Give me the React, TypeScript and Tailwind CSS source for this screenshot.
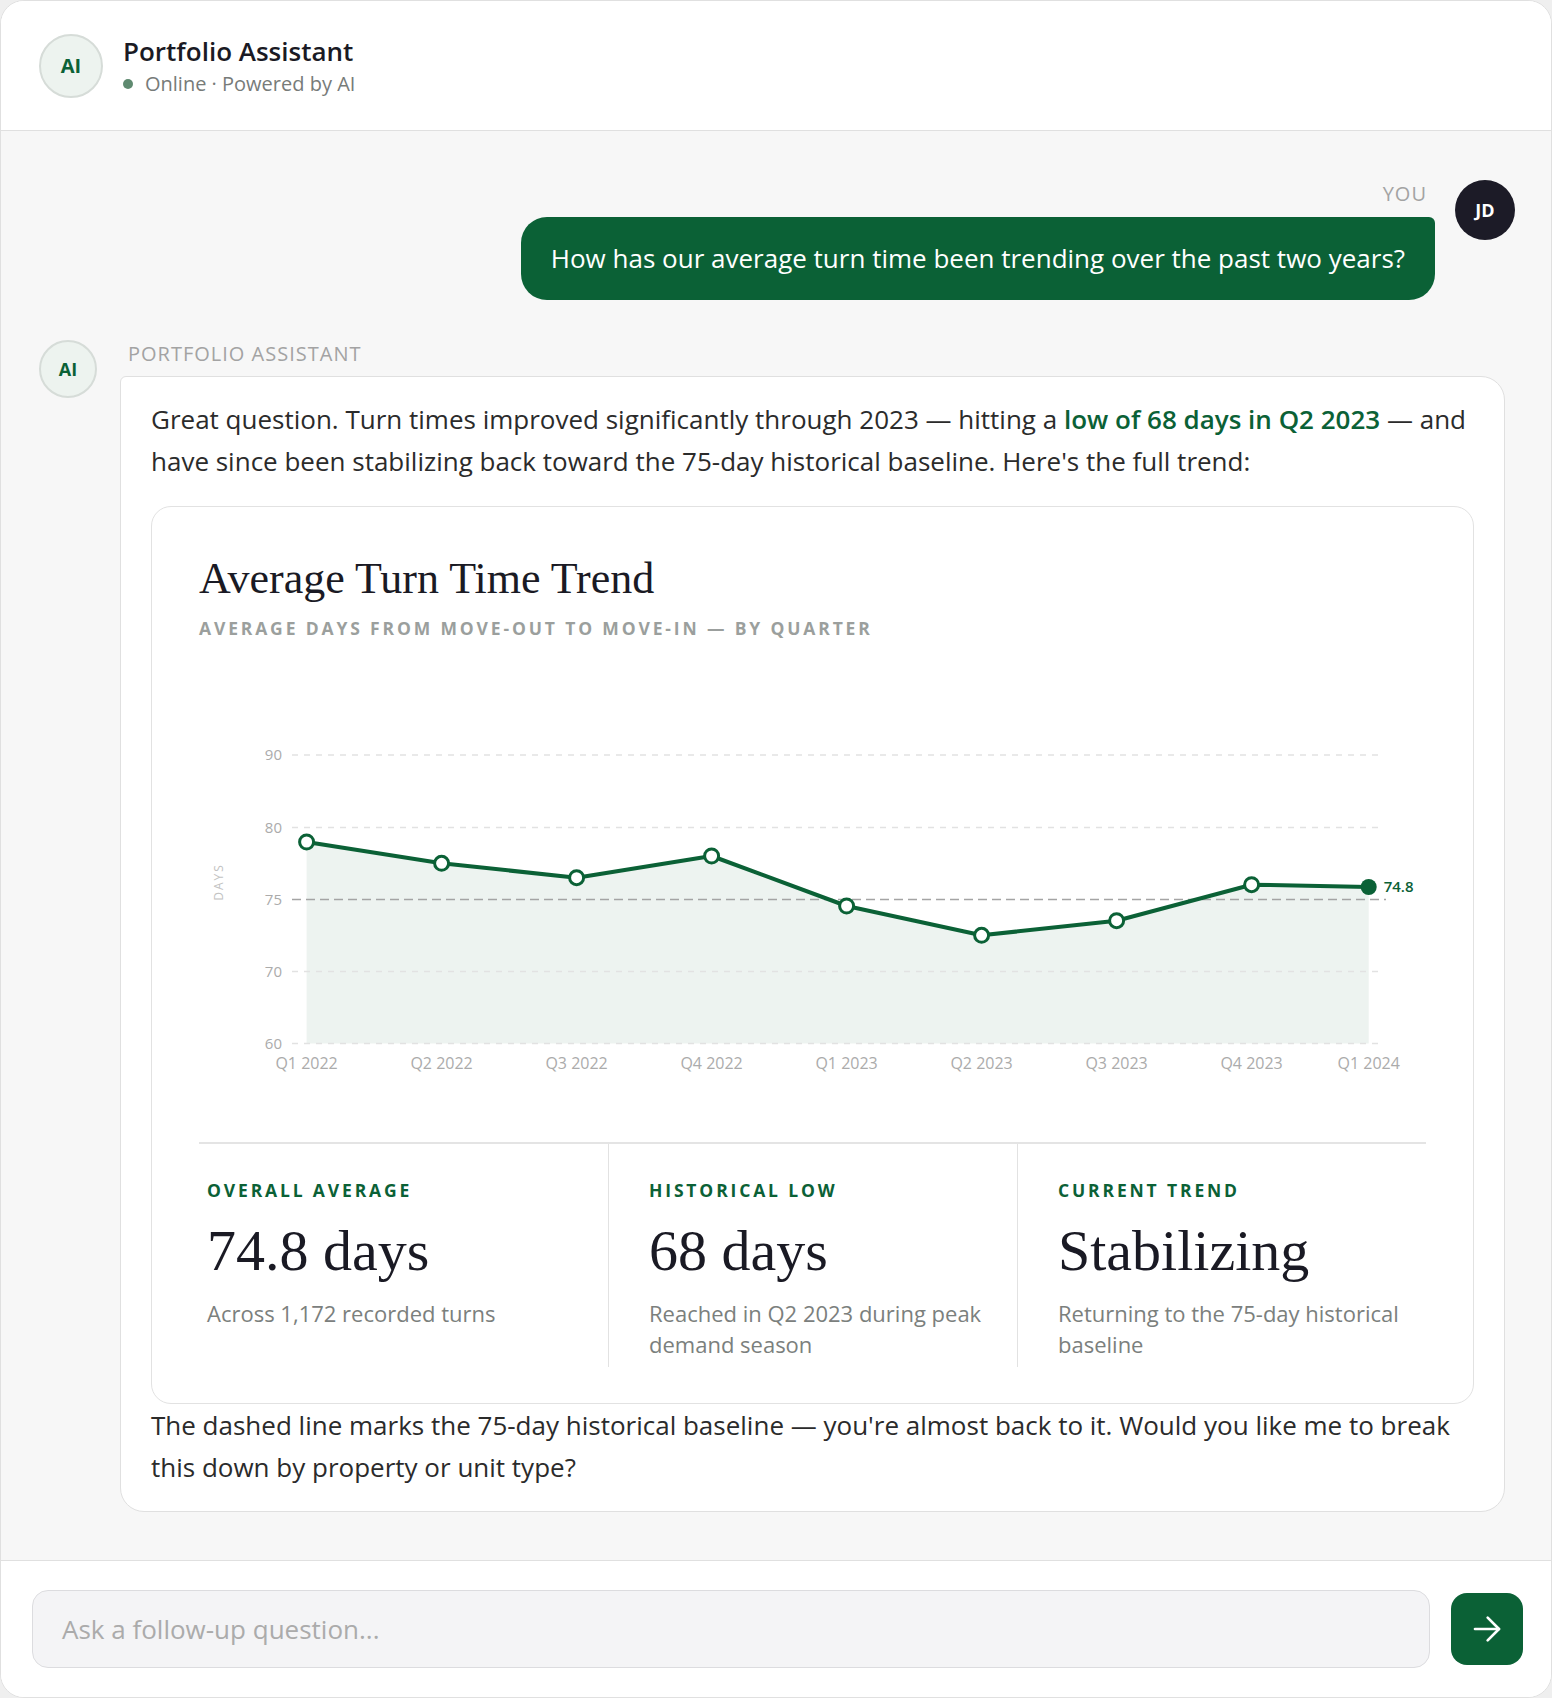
import { ReactNode } from "react";

const GREEN = "#0b6136";

const points = [
  { label: "Q1 2022", x: 107.6, y: 180 },
  { label: "Q2 2022", x: 242.6, y: 201.3 },
  { label: "Q3 2022", x: 377.6, y: 215.7 },
  { label: "Q4 2022", x: 512.6, y: 194 },
  { label: "Q1 2023", x: 647.6, y: 244 },
  { label: "Q2 2023", x: 782.6, y: 273.3 },
  { label: "Q3 2023", x: 917.6, y: 258.7 },
  { label: "Q4 2023", x: 1052.6, y: 222.7 },
  { label: "Q1 2024", x: 1169.7, y: 225 },
];

const gridLines = [
  { value: "90", y: 93 },
  { value: "80", y: 165.5 },
  { value: "75", y: 237.5, baseline: true },
  { value: "70", y: 309.5 },
  { value: "60", y: 381.5 },
];

const TrendChart = () => {
  const line = points.map((p, i) => `${i === 0 ? "M" : "L"}${p.x} ${p.y}`).join(" ");
  const last = points[points.length - 1];
  const area = `${line} L${last.x} 381.5 L${points[0].x} 381.5 Z`;

  return (
    <svg width="1224" height="440" viewBox="0 0 1224 440" className="block">
      <path d={area} fill="#edf3f0" />
      {gridLines.map((g) => (
        <g key={g.value}>
          <line
            x1={93}
            x2={g.baseline ? 1187 : 1181}
            y1={g.y}
            y2={g.y}
            stroke={g.baseline ? "#a4a4a4" : "#e2e2e2"}
            strokeWidth={1.5}
            strokeDasharray={g.baseline ? "9 5" : "6 6"}
          />
          <text
            x={83}
            y={g.y + 5}
            textAnchor="end"
            fontSize={15}
            fill="#ababab"
            fontFamily="'Open Sans', sans-serif"
          >
            {g.value}
          </text>
        </g>
      ))}
      <text
        x={0}
        y={0}
        transform="translate(24 220) rotate(-90)"
        textAnchor="middle"
        fontSize={12}
        letterSpacing={2}
        fill="#c2c2c2"
        fontFamily="'Open Sans', sans-serif"
      >
        DAYS
      </text>
      <path d={line} fill="none" stroke={GREEN} strokeWidth={4} strokeLinejoin="round" strokeLinecap="round" />
      {points.map((p, i) =>
        i === points.length - 1 ? (
          <circle key={p.label} cx={p.x} cy={p.y} r={8} fill={GREEN} />
        ) : (
          <circle key={p.label} cx={p.x} cy={p.y} r={7} fill="#fff" stroke={GREEN} strokeWidth={3} />
        )
      )}
      <text
        x={last.x + 15}
        y={last.y + 5}
        fontSize={15}
        fontWeight={600}
        fill={GREEN}
        fontFamily="'Open Sans', sans-serif"
      >
        74.8
      </text>
      {points.map((p) => (
        <text
          key={p.label}
          x={p.x}
          y={407}
          textAnchor="middle"
          fontSize={16}
          fill="#ababab"
          fontFamily="'Open Sans', sans-serif"
        >
          {p.label}
        </text>
      ))}
    </svg>
  );
};

const Stat = ({ label, value, note, className }: { label: string; value: string; note: ReactNode; className: string }) => (
  <div className={`pt-[34px] pb-[7px] ${className}`}>
    <div className="text-[17.5px] leading-[24px] font-bold tracking-[2.85px] text-[#0b6136]">{label}</div>
    <div className="mt-[15px] font-['Liberation_Serif',serif] text-[58px] leading-[68px] text-[#1a1a24]">{value}</div>
    <div className="mt-[13px] text-[22px] leading-[31px] text-[#7b807d]">{note}</div>
  </div>
);

export default function App() {
  return (
    <div className="min-h-screen bg-[#efefef] font-['Open_Sans',sans-serif]">
      <div className="h-[1698px] flex flex-col bg-white border border-[#e0e0e0] rounded-[24px] overflow-hidden">
        {/* header */}
        <div className="h-[130px] shrink-0 flex items-center gap-[20px] pl-[38px] border-b border-[#e0e0e0] bg-white">
          <div className="w-[64px] h-[64px] rounded-full bg-[#edf3ef] border-2 border-[#d6dcd8] flex items-center justify-center text-[20px] font-bold text-[#0b6136]">
            AI
          </div>
          <div>
            <div className="text-[26px] leading-[34px] font-semibold text-[#1a1a24]">Portfolio Assistant</div>
            <div className="flex items-center gap-[12px] text-[20px] leading-[28px] text-[#777b79] mt-[2px]">
              <span className="w-[10px] h-[10px] rounded-full bg-[#5f8a70]"></span>
              Online · Powered by AI
            </div>
          </div>
        </div>

        {/* messages */}
        <div className="flex-1 bg-[#f7f7f7] pt-[49px] pl-[38px] pr-[36px]">
          <div className="flex justify-end items-start gap-[20px]">
            <div className="flex flex-col items-end">
              <div className="pr-[8px] text-[20px] leading-[27px] font-medium tracking-[1px] text-[#a3a3a3]">YOU</div>
              <div className="mt-[10px] bg-[#0b6136] text-white text-[26px] leading-[35px] px-[30px] py-[24px] rounded-[26px] rounded-tr-[6px]">
                How has our average turn time been trending over the past two years?
              </div>
            </div>
            <div className="w-[60px] h-[60px] rounded-full bg-[#1c1b27] flex items-center justify-center text-white text-[18px] font-bold">
              JD
            </div>
          </div>

          <div className="flex items-start gap-[23px] mt-[40px]">
            <div className="w-[58px] h-[58px] shrink-0 rounded-full bg-[#edf3ef] border-2 border-[#d6dcd8] flex items-center justify-center text-[18px] font-bold text-[#0b6136]">
              AI
            </div>
            <div className="flex-1 mr-[10px]">
              <div className="pl-[8px] text-[20px] leading-[27px] font-medium tracking-[1px] text-[#a3a3a3]">PORTFOLIO ASSISTANT</div>
              <div className="mt-[9px] bg-white border border-[#e0e0e0] rounded-[24px] rounded-tl-[6px] px-[30px] pt-[21px] pb-[23px] text-[26px] leading-[42px] text-[#2b2b2b]">
                <p>
                  Great question. Turn times improved significantly through 2023 — hitting a{" "}
                  <span className="font-semibold text-[#0b6136]">low of 68 days in Q2 2023</span> — and have since been
                  stabilizing back toward the 75-day historical baseline. Here's the full trend:
                </p>

                <div className="mt-[24px] border border-[#e2e2e2] rounded-[20px] px-[47px] pt-[46px] pb-[36px]">
                  <div className="font-['Liberation_Serif',serif] text-[44px] leading-[52px] text-[#1a1a24]">
                    Average Turn Time Trend
                  </div>
                  <div className="mt-[11px] text-[17.5px] leading-[24px] font-bold tracking-[2.85px] text-[#9b9f9d]">
                    AVERAGE DAYS FROM MOVE-OUT TO MOVE-IN — BY QUARTER
                  </div>
                  <div className="mt-[22px]">
                    <TrendChart />
                  </div>
                  <div className="mt-[40px] border-t-2 border-[#e4e4e4] grid grid-cols-3">
                    <Stat
                      className="pl-[8px] pr-[20px]"
                      label="OVERALL AVERAGE"
                      value="74.8 days"
                      note="Across 1,172 recorded turns"
                    />
                    <Stat
                      className="pl-[40px] pr-[20px] border-l border-[#e2e2e2]"
                      label="HISTORICAL LOW"
                      value="68 days"
                      note="Reached in Q2 2023 during peak demand season"
                    />
                    <Stat
                      className="pl-[40px] pr-[20px] border-l border-[#e2e2e2]"
                      label="CURRENT TREND"
                      value="Stabilizing"
                      note="Returning to the 75-day historical baseline"
                    />
                  </div>
                </div>

                <p>
                  The dashed line marks the 75-day historical baseline — you're almost back to it. Would you like me to
                  break this down by property or unit type?
                </p>
              </div>
            </div>
          </div>
        </div>

        {/* input */}
        <div className="shrink-0 flex items-center gap-[21px] pl-[31px] pr-[28px] py-[29px] border-t border-[#e0e0e0] bg-white">
          <div className="flex-1 h-[78px] flex items-center px-[29px] bg-[#f4f4f6] border border-[#dcdcdf] rounded-[16px] text-[26px] text-[#ababab]">
            Ask a follow-up question...
          </div>
          <button className="w-[72px] h-[72px] shrink-0 rounded-[16px] bg-[#0b6136] flex items-center justify-center">
            <svg width="32" height="32" viewBox="0 0 24 24" fill="none" stroke="#fff" strokeWidth="2" strokeLinecap="round" strokeLinejoin="round">
              <path d="M3 12h18" />
              <path d="M12.5 3.5 21 12l-8.5 8.5" />
            </svg>
          </button>
        </div>
      </div>
    </div>
  );
}
